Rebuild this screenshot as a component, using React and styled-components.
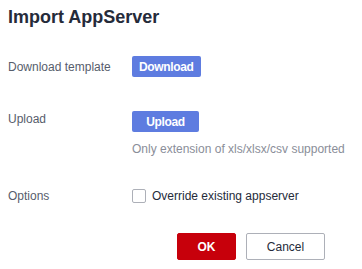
import React from 'react';
import styled, { createGlobalStyle } from 'styled-components';

const GlobalStyle = createGlobalStyle`
  body {
    margin: 0;
    background: #fff;
    font-family: 'Liberation Sans', Arial, sans-serif;
  }
`;

const Dialog = styled.div`
  width: 362px;
  box-sizing: border-box;
  padding: 5px 8px 0 8px;
`;

const Title = styled.h1`
  margin: 0;
  font-size: 18px;
  line-height: 24px;
  font-weight: 700;
  color: #252b3a;
`;

const Row = styled.div`
  display: flex;
  align-items: ${(p) => (p.top ? 'flex-start' : 'center')};
  margin-top: ${(p) => p.gap}px;
`;

const Label = styled.div`
  width: 124px;
  flex: none;
  font-size: 12px;
  line-height: 16px;
  color: #575d6c;
`;

const Field = styled.div`
  display: flex;
  flex-direction: column;
  align-items: flex-start;
`;

const PrimaryButton = styled.button`
  height: 21px;
  min-width: 67px;
  padding: 0 7px;
  border: none;
  border-radius: 2px;
  background: #5e7ce0;
  color: #fff;
  font-family: inherit;
  font-size: 12px;
  letter-spacing: -0.35px;
  font-weight: 700;
  cursor: pointer;
`;

const Hint = styled.div`
  margin-top: 9px;
  font-size: 12px;
  line-height: 16px;
  color: #8a8e99;
`;

const CheckLabel = styled.label`
  display: flex;
  align-items: center;
  gap: 6px;
  font-size: 12px;
  line-height: 16px;
  color: #252b3a;
`;

const Box = styled.span`
  width: 14px;
  height: 14px;
  box-sizing: border-box;
  border: 1px solid #adb0b8;
  border-radius: 2px;
  background: #fff;
`;

const Footer = styled.div`
  display: flex;
  justify-content: flex-end;
  gap: 10px;
  margin-top: 29px;
  margin-right: 29px;
`;

const FooterButton = styled.button`
  width: ${(p) => p.w}px;
  height: 27px;
  box-sizing: border-box;
  border-radius: 2px;
  font-family: inherit;
  font-size: 12px;
  cursor: pointer;
  border: 1px solid ${(p) => (p.danger ? '#c7000b' : '#adb0b8')};
  background: ${(p) => (p.danger ? '#c7000b' : '#fff')};
  color: ${(p) => (p.danger ? '#fff' : '#252b3a')};
  font-weight: ${(p) => (p.danger ? 700 : 400)};
`;

export default function App() {
  return (
    <>
      <GlobalStyle />
      <Dialog>
        <Title>Import AppServer</Title>
        <Row gap={27}>
          <Label>Download template</Label>
          <PrimaryButton>Download</PrimaryButton>
        </Row>
        <Row gap={34} top>
          <Label>Upload</Label>
          <Field>
            <PrimaryButton>Upload</PrimaryButton>
            <Hint>Only extension of xls/xlsx/csv supported</Hint>
          </Field>
        </Row>
        <Row gap={31}>
          <Label>Options</Label>
          <CheckLabel>
            <Box />
            Override existing appserver
          </CheckLabel>
        </Row>
        <Footer>
          <FooterButton danger w={59}>OK</FooterButton>
          <FooterButton w={79}>Cancel</FooterButton>
        </Footer>
      </Dialog>
    </>
  );
}
